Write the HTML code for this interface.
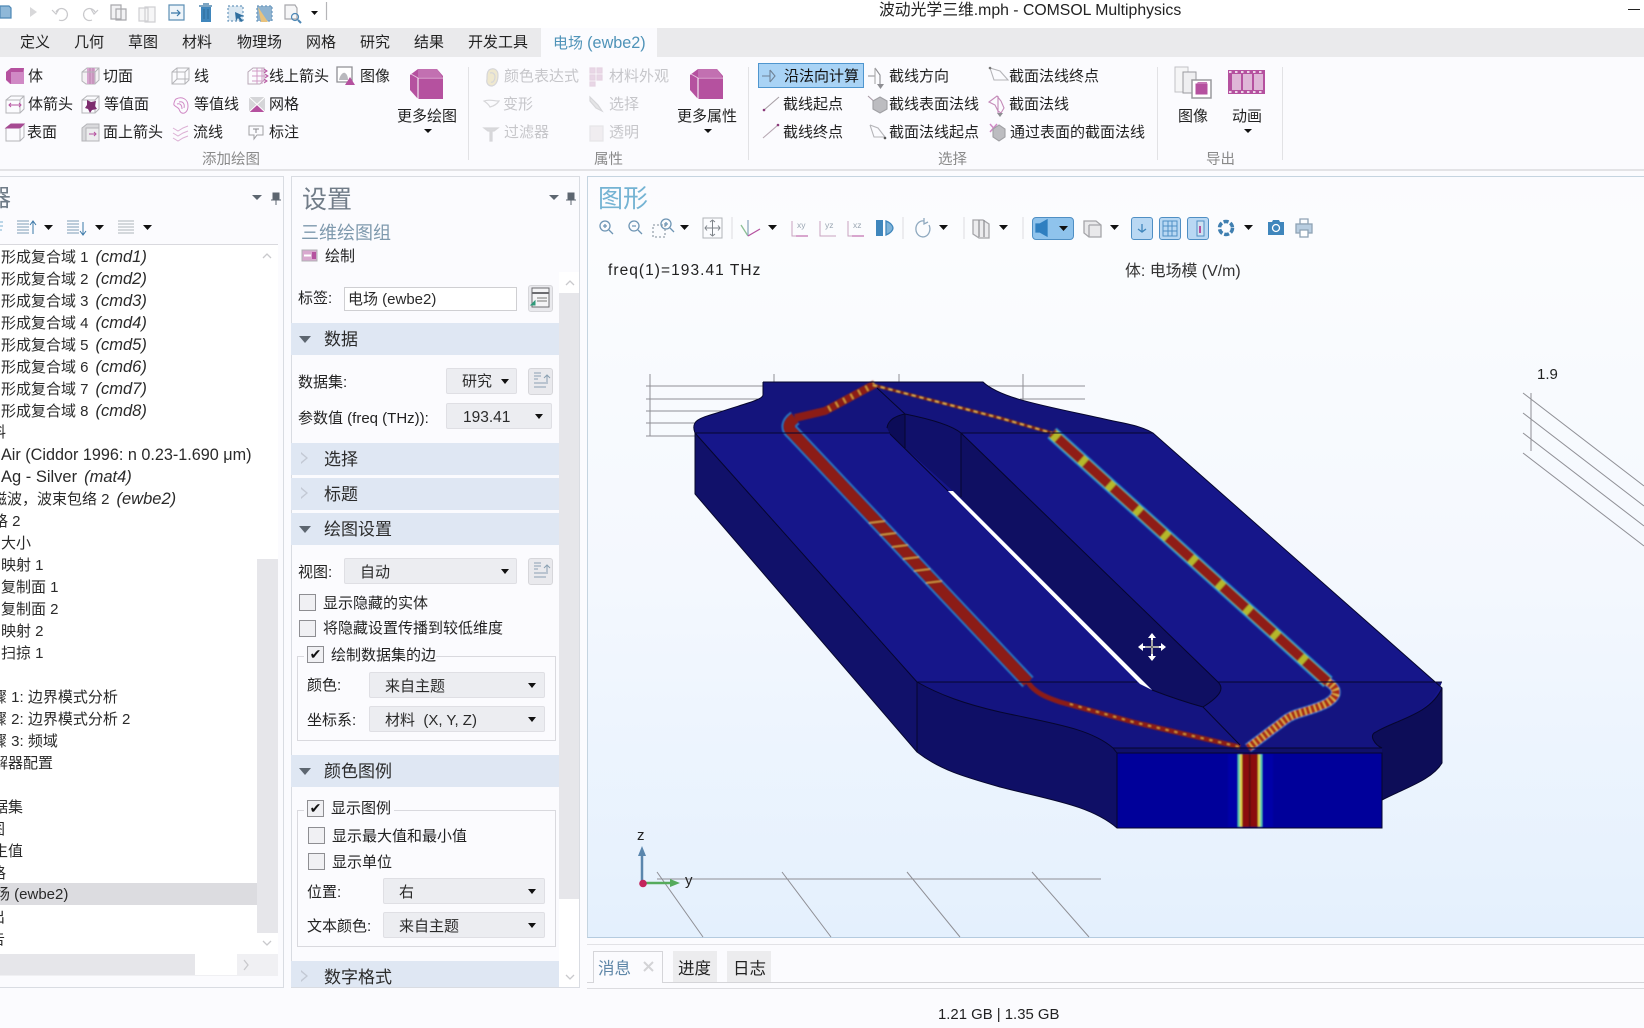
<!DOCTYPE html>
<html lang="zh"><head><meta charset="utf-8"><title>COMSOL</title>
<style>
html,body{margin:0;padding:0}
body{position:relative;width:1644px;height:1028px;overflow:hidden;background:#fbfbfe;font-family:"Liberation Sans","Noto Sans CJK SC",sans-serif;font-size:15px;color:#222}
.t{position:absolute;white-space:pre;line-height:20px;height:20px}
.b{position:absolute;box-sizing:border-box}
.g{color:#c6c6ca}
.l{color:#8a8a8a;font-size:14.5px}
.r{position:absolute;white-space:pre;line-height:24px;height:24px;font-size:15px;color:#2a2a2a}
.r i{margin-left:7px;font-size:16.5px}
.ar{position:absolute;width:0;height:0;border-left:4px solid transparent;border-right:4px solid transparent;border-top:5px solid #111}
.sec{position:absolute;left:291px;width:268px;height:32px;background:#dfe7f3;font-size:17px;line-height:33px;color:#2a2a2a}
.sec span{position:absolute;left:33px;white-space:pre}
.tri{position:absolute;left:8px;top:13px;width:0;height:0;border-left:6px solid transparent;border-right:6px solid transparent;border-top:7px solid #5d6670}
.otri{position:absolute;left:10px;top:9px;width:0;height:0;border-top:6px solid transparent;border-bottom:6px solid transparent;border-left:7px solid #c3c9d4}
.otri:after{content:"";position:absolute;left:-7px;top:-4px;border-top:4px solid transparent;border-bottom:4px solid transparent;border-left:5px solid #dfe7f3}
.cb{position:absolute;box-sizing:border-box;background:#f0f0f3;border:1px solid #8e8e92;width:17px;height:17px;font-size:14px;line-height:14px;text-align:center;color:#111}
.cmb{position:absolute;box-sizing:border-box;background:#ecedf1;border:1px solid #dfdfe4;border-radius:2px;height:26px;line-height:28px;white-space:pre;color:#2a2a2a;overflow:hidden}
.tb{position:absolute;box-sizing:border-box;background:#e9e9ed;border:1px solid #d6d6da;border-radius:3px}
</style></head><body>

<!-- title -->
<div class="b" style="left:0;top:0;width:1644px;height:28px;background:#fff"></div>
<div class="t" style="left:879px;top:1px;font-size:15.800px;color:#222">波动光学三维.mph - COMSOL Multiphysics</div>
<div class="b" style="left:1628px;top:9px;width:12px;height:1px;background:#222"></div>

<!-- tab bar -->
<div class="b" style="left:0;top:28px;width:1644px;height:29px;background:#eaeaec"></div>
<div class="b" style="left:541px;top:28px;width:116px;height:29px;background:#fbfbfe"></div>
<div class="t" style="left:20px;top:33px">定义</div>
<div class="t" style="left:74px;top:33px">几何</div>
<div class="t" style="left:128px;top:33px">草图</div>
<div class="t" style="left:182px;top:33px">材料</div>
<div class="t" style="left:237px;top:33px">物理场</div>
<div class="t" style="left:306px;top:33px">网格</div>
<div class="t" style="left:360px;top:33px">研究</div>
<div class="t" style="left:414px;top:33px">结果</div>
<div class="t" style="left:468px;top:33px">开发工具</div>
<div class="t" style="left:553px;top:33px;color:#4f93b8">电场 <span style="font-size:16.200px">(ewbe2)</span></div>

<!-- ribbon text -->
<div class="b" style="left:0;top:169px;width:1644px;height:2px;background:#e3e3e6"></div>
<div class="t" style="left:28px;top:67px">体</div><div class="t" style="left:103px;top:67px">切面</div><div class="t" style="left:194px;top:67px">线</div><div class="t" style="left:269px;top:67px">线上箭头</div><div class="t" style="left:360px;top:67px">图像</div>
<div class="t" style="left:28px;top:95px">体箭头</div><div class="t" style="left:104px;top:95px">等值面</div><div class="t" style="left:194px;top:95px">等值线</div><div class="t" style="left:269px;top:95px">网格</div>
<div class="t" style="left:27px;top:123px">表面</div><div class="t" style="left:103px;top:123px">面上箭头</div><div class="t" style="left:193px;top:123px">流线</div><div class="t" style="left:269px;top:123px">标注</div>
<div class="t" style="left:397px;top:107px">更多绘图</div>
<div class="ar" style="left:424px;top:129px;border-top-width:4px"></div>
<div class="t l" style="left:202px;top:150px">添加绘图</div>
<div class="b" style="left:468px;top:67px;width:1px;height:93px;background:#e2e2e5"></div>
<div class="t g" style="left:504px;top:67px">颜色表达式</div><div class="t g" style="left:503px;top:95px">变形</div><div class="t g" style="left:504px;top:123px">过滤器</div>
<div class="t g" style="left:609px;top:67px">材料外观</div><div class="t g" style="left:609px;top:95px">选择</div><div class="t g" style="left:609px;top:123px">透明</div>
<div class="t" style="left:677px;top:107px">更多属性</div>
<div class="ar" style="left:704px;top:129px;border-top-width:4px"></div>
<div class="t l" style="left:594px;top:150px">属性</div>
<div class="b" style="left:748px;top:67px;width:1px;height:93px;background:#e2e2e5"></div>
<div class="b" style="left:758px;top:63px;width:106px;height:25px;background:#a9d3f5;border:1px solid #4f96cf"></div>
<div class="t" style="left:784px;top:67px;color:#111">沿法向计算</div>
<div class="t" style="left:783px;top:95px">截线起点</div><div class="t" style="left:783px;top:123px">截线终点</div>
<div class="t" style="left:889px;top:67px">截线方向</div><div class="t" style="left:889px;top:95px">截线表面法线</div><div class="t" style="left:889px;top:123px">截面法线起点</div>
<div class="t" style="left:1009px;top:67px">截面法线终点</div><div class="t" style="left:1009px;top:95px">截面法线</div><div class="t" style="left:1010px;top:123px">通过表面的截面法线</div>
<div class="t l" style="left:938px;top:150px">选择</div>
<div class="b" style="left:1157px;top:67px;width:1px;height:93px;background:#e2e2e5"></div>
<div class="t" style="left:1178px;top:107px">图像</div><div class="t" style="left:1232px;top:107px">动画</div>
<div class="ar" style="left:1244px;top:129px;border-top-width:4px"></div>
<div class="t l" style="left:1206px;top:150px">导出</div>
<div class="b" style="left:1282px;top:67px;width:1px;height:93px;background:#e2e2e5"></div>

<!-- tree panel -->
<div class="b" style="left:-2px;top:176px;width:286px;height:812px;border:1px solid #d9dce2"></div>
<div class="t" style="left:-13px;top:184px;font-size:24px;line-height:30px;height:30px;color:#707c88">器</div>
<div class="b" style="left:-2px;top:244px;width:280px;height:732px;background:#fff;border:1px solid #d9d9de"></div>
<div class="b" style="left:257px;top:245px;width:21px;height:730px;background:#fff"></div>
<div class="b" style="left:257px;top:559px;width:21px;height:374px;background:#e6e6ea"></div>
<div class="b" style="left:0;top:954px;width:278px;height:22px;background:#f0f0f3"></div>
<div class="b" style="left:0;top:954px;width:195px;height:21px;background:#e6e6ea"></div>
<div class="b" style="left:195px;top:954px;width:42px;height:21px;background:#fff"></div>
<div class="b" style="left:0;top:883px;width:257px;height:22px;background:#dcdce0"></div>
<div class="r" style="left:1px;top:245px">形成复合域 1<i>(cmd1)</i></div>
<div class="r" style="left:1px;top:267px">形成复合域 2<i>(cmd2)</i></div>
<div class="r" style="left:1px;top:289px">形成复合域 3<i>(cmd3)</i></div>
<div class="r" style="left:1px;top:311px">形成复合域 4<i>(cmd4)</i></div>
<div class="r" style="left:1px;top:333px">形成复合域 5<i>(cmd5)</i></div>
<div class="r" style="left:1px;top:355px">形成复合域 6<i>(cmd6)</i></div>
<div class="r" style="left:1px;top:377px">形成复合域 7<i>(cmd7)</i></div>
<div class="r" style="left:1px;top:399px">形成复合域 8<i>(cmd8)</i></div>
<div class="r" style="left:-24px;top:421px">材料</div>
<div class="r" style="left:1px;top:443px;font-size:16.200px">Air (Ciddor 1996: n 0.23-1.690 μm)</div>
<div class="r" style="left:1px;top:465px;font-size:16.500px">Ag - Silver<i>(mat4)</i></div>
<div class="r" style="left:-23px;top:487px">电磁波，波束包络 2<i>(ewbe2)</i></div>
<div class="r" style="left:-22px;top:510px">网格 2</div>
<div class="r" style="left:1px;top:532px">大小</div>
<div class="r" style="left:1px;top:554px">映射 1</div>
<div class="r" style="left:1px;top:576px">复制面 1</div>
<div class="r" style="left:1px;top:598px">复制面 2</div>
<div class="r" style="left:1px;top:620px">映射 2</div>
<div class="r" style="left:1px;top:642px">扫掠 1</div>
<div class="r" style="left:-23px;top:686px">步骤 1: 边界模式分析</div>
<div class="r" style="left:-23px;top:708px">步骤 2: 边界模式分析 2</div>
<div class="r" style="left:-23px;top:730px">步骤 3: 频域</div>
<div class="r" style="left:-22px;top:752px">求解器配置</div>
<div class="r" style="left:-22px;top:796px">数据集</div>
<div class="r" style="left:-25px;top:818px">绘图</div>
<div class="r" style="left:-22px;top:840px">派生值</div>
<div class="r" style="left:-24px;top:862px">表格</div>
<div class="r" style="left:-20px;top:883px">电场 (ewbe2)</div>
<div class="r" style="left:-25px;top:906px">导出</div>
<div class="r" style="left:-25px;top:928px">报告</div>

<!-- settings panel -->
<div class="b" style="left:291px;top:176px;width:289px;height:812px;border:1px solid #d9dce2"></div>
<div class="t" style="left:302px;top:184px;font-size:25px;line-height:32px;height:32px;color:#717c88">设置</div>
<div class="t" style="left:301px;top:221px;font-size:18px;line-height:24px;height:24px;color:#7e99ad">三维绘图组</div>
<div class="t" style="left:325px;top:247px">绘制</div>
<div class="b" style="left:559px;top:272px;width:20px;height:715px;background:#fff"></div>
<div class="b" style="left:559px;top:293px;width:20px;height:606px;background:#e6e6ea"></div>

<div class="t" style="left:298px;top:289px">标签:</div>
<div class="b" style="left:344px;top:287px;width:173px;height:24px;background:#fff;border:1px solid #cfcfd2;line-height:23px;padding-left:3px;white-space:pre;color:#2a2a2a">电场 (ewbe2)</div>
<div class="tb" style="left:528px;top:285px;width:25px;height:27px"></div>

<div class="sec" style="top:323px"><div class="tri"></div><span>数据</span></div>
<div class="t" style="left:298px;top:373px">数据集:</div>
<div class="cmb" style="left:446px;top:368px;width:71px;padding-left:15px;line-height:26px">研究</div><div class="ar" style="left:501px;top:379px"></div>
<div class="tb" style="left:528px;top:368px;width:25px;height:27px"></div>
<div class="t" style="left:298px;top:409px">参数值 (freq (THz)):</div>
<div class="cmb" style="left:446px;top:403px;width:106px;padding-left:16px;font-size:15.500px">193.41</div><div class="ar" style="left:535px;top:414px"></div>

<div class="sec" style="top:443px"><div class="otri"></div><span>选择</span></div>
<div class="sec" style="top:478px"><div class="otri"></div><span>标题</span></div>
<div class="sec" style="top:513px"><div class="tri"></div><span>绘图设置</span></div>
<div class="t" style="left:298px;top:563px">视图:</div>
<div class="cmb" style="left:344px;top:558px;width:173px;padding-left:15px">自动</div><div class="ar" style="left:501px;top:569px"></div>
<div class="tb" style="left:528px;top:558px;width:25px;height:27px"></div>
<div class="cb" style="left:299px;top:594px"></div><div class="t" style="left:323px;top:594px">显示隐藏的实体</div>
<div class="cb" style="left:299px;top:620px"></div><div class="t" style="left:323px;top:619px">将隐藏设置传播到较低维度</div>
<div class="b" style="left:297px;top:656px;width:259px;height:85px;border:1px solid #d9d9de"></div>
<div class="b" style="left:304px;top:645px;width:132px;height:20px;background:#fbfbfe"></div>
<div class="cb" style="left:307px;top:646px">✔</div><div class="t" style="left:331px;top:646px">绘制数据集的边</div>
<div class="t" style="left:307px;top:676px">颜色:</div>
<div class="cmb" style="left:369px;top:672px;width:176px;padding-left:15px">来自主题</div><div class="ar" style="left:528px;top:683px"></div>
<div class="t" style="left:307px;top:711px">坐标系:</div>
<div class="cmb" style="left:369px;top:706px;width:176px;padding-left:15px">材料  (X, Y, Z)</div><div class="ar" style="left:528px;top:717px"></div>

<div class="sec" style="top:755px"><div class="tri"></div><span>颜色图例</span></div>
<div class="b" style="left:297px;top:810px;width:259px;height:137px;border:1px solid #d9d9de"></div>
<div class="b" style="left:304px;top:799px;width:90px;height:20px;background:#fbfbfe"></div>
<div class="cb" style="left:307px;top:800px">✔</div><div class="t" style="left:331px;top:799px">显示图例</div>
<div class="cb" style="left:308px;top:827px"></div><div class="t" style="left:332px;top:827px">显示最大值和最小值</div>
<div class="cb" style="left:308px;top:853px"></div><div class="t" style="left:332px;top:853px">显示单位</div>
<div class="t" style="left:307px;top:883px">位置:</div>
<div class="cmb" style="left:383px;top:878px;width:162px;padding-left:15px">右</div><div class="ar" style="left:528px;top:889px"></div>
<div class="t" style="left:307px;top:917px">文本颜色:</div>
<div class="cmb" style="left:383px;top:912px;width:162px;padding-left:15px">来自主题</div><div class="ar" style="left:528px;top:923px"></div>
<div class="sec" style="top:961px;height:26px;overflow:hidden"><div class="otri"></div><span>数字格式</span></div>

<!-- graphics panel -->
<div class="b" style="left:587px;top:176px;width:1058px;height:762px;border:1px solid #c5d4e0;border-bottom-color:#b5cbdf;background:linear-gradient(#fbfbfe 0,#fbfcfe 70px,#f4f8fe 400px,#e4f0fd 760px)"></div>
<div class="t" style="left:598px;top:183px;font-size:25px;line-height:32px;height:32px;color:#74b3d3">图形</div>
<div class="b" style="left:1032px;top:217px;width:42px;height:23px;background:#8fc3ec;border:1px solid #4f8fc4;border-radius:4px"></div>
<div class="tb" style="left:1131px;top:217px;width:22px;height:23px;background:#b9d8f3;border-color:#4f8fc4"></div>
<div class="tb" style="left:1159px;top:217px;width:22px;height:23px;background:#b9d8f3;border-color:#4f8fc4"></div>
<div class="tb" style="left:1187px;top:217px;width:22px;height:23px;background:#b9d8f3;border-color:#4f8fc4"></div>
<div class="t" style="left:608px;top:261px;font-size:15.500px;letter-spacing:1.050px">freq(1)=193.41 THz</div>
<div class="t" style="left:1125px;top:262px;font-size:15.900px;color:#333">体: 电场模 (V/m)</div>

<!-- messages -->
<div class="b" style="left:587px;top:944px;width:1058px;height:1px;background:#e2e2e6"></div>
<div class="b" style="left:587px;top:982px;width:1058px;height:1px;background:#d5d5d9"></div>
<div class="b" style="left:587px;top:988px;width:1058px;height:1px;background:#dcdce0"></div>
<div class="b" style="left:593px;top:951px;width:70px;height:32px;background:#fbfbfe;border:1px solid #d5d5d9;border-bottom:none"></div>
<div class="b" style="left:673px;top:951px;width:44px;height:31px;background:#ececee"></div>
<div class="b" style="left:727px;top:951px;width:44px;height:31px;background:#ececee"></div>
<div class="t" style="left:598px;top:959px;font-size:16.500px;color:#5f87a8">消息</div>
<div class="t" style="left:678px;top:959px;font-size:16.500px">进度</div>
<div class="t" style="left:733px;top:959px;font-size:16.500px">日志</div>
<div class="t" style="left:938px;top:1005px;font-size:14.900px">1.21 GB | 1.35 GB</div>

<!-- all vector art -->
<svg width="1644" height="1028" viewBox="0 0 1644 1028" style="position:absolute;left:0;top:0" fill="none">
<filter id="soft" x="-5%" y="-5%" width="110%" height="110%"><feGaussianBlur stdDeviation=".7"/></filter>
<!-- ===== quick access ===== -->
<g stroke-width="1.2">
<path d="M0 6h9l2 2v10H0z" fill="#8fb8d8" stroke="#4d87b5"/>
<path d="M30 7l7 5-7 5z" fill="#d8d8da"/>
<path d="M56 12a6 6 0 1 1 3 8M52 10l4 4 3-5" stroke="#c9c9cc"/>
<path d="M95 12a6 6 0 1 0-3 8M98 10l-4 4-3-5" stroke="#c9c9cc"/>
<path d="M111 5h10v14h-10zM116 9h10v11h-10z" stroke="#a8a8ac" fill="#f2f2f4"/>
<path d="M139 8h9v13h-9zM145 7h10v15h-10z" stroke="#cfcfd2" fill="#f6f6f7"/>
<path d="M169 5h15v15h-15z" stroke="#5d8fb5" fill="#eef4f9"/><path d="M171 13h9m-3-3l3 3-3 3" stroke="#3a78a8"/>
<path d="M201 7h10v15h-10z" fill="#3f86bc"/><path d="M199 6h13M203 4h6M204 9v10M208 9v10" stroke="#2f6f9f"/>
<rect x="228" y="6" width="15" height="15" stroke="#6a98bd" stroke-dasharray="2 2" fill="#dbe8f2"/><path d="M235 12l9 4-4 1 3 4-2 1-3-4-2 3z" fill="#2f6f9f"/>
<rect x="257" y="6" width="15" height="15" stroke="#6a98bd" stroke-dasharray="2 2" fill="#8fb3d0"/><path d="M258 7l10 15h-7z" fill="#e8c27d"/>
<path d="M285 5h10l2 3v11h-12z" stroke="#a8a8ac" fill="#f6f6f7"/><circle cx="295" cy="17" r="3.500" stroke="#4d87b5"/><path d="M298 20l3 3" stroke="#4d87b5" stroke-width="2"/>
<path d="M311 11h7l-3.500 4z" fill="#111"/><path d="M326.500 2v18" stroke="#b5b5b8"/>
</g>

<!-- ===== ribbon icons ===== -->
<g stroke="#b4b4b8" stroke-width="1">
<!-- 体 --><path d="M6 72l5-4h13v16H10l-4-4z" fill="#d089c5" stroke="none"/><path d="M6 72l5-4h13l-1 4H11v12l-5-4z" fill="#b5519f" stroke="none"/>
<!-- 切面 --><path d="M82 72l5-4h12v12l-4 4H86l-4-3z" fill="#f4f0f4"/><path d="M87 68h8v16h-8z" fill="#d7a5cf" stroke="none"/><path d="M90 68v16M93 68v16" stroke="#b987ae"/><path d="M82 72h13v12M95 72l4-4"/>
<!-- 线 --><path d="M172 72l5-4h12v12l-4 4h-13zM172 72h13v12M185 72l4-4M177 68v11l-5 5M177 79h12"/>
<!-- 线上箭头 --><path d="M248 72l5-4h11v12l-4 4h-12z" stroke="#b9a8b6"/><path d="M252 71h14M252 76h15M252 81h14M257 68v16M262 68v16" stroke="#d09bc5"/><path d="M264 69l3 2-3 2M265 74l3 2-3 2M264 79l3 2-3 2" stroke="#b5519f"/>
<!-- 图像 --><path d="M337 67h15v15h-15z" fill="#fff" stroke="#8f8f94" stroke-width="1.300"/><path d="M339 80c1-5 4-8 6-7 2 1 3 4 3 7z" fill="#b9b9bd" stroke="none"/><path d="M345 85l5-8 5 8z" fill="#b5519f" stroke="none"/>
<!-- 体箭头 --><path d="M6 100l5-4h13v13l-4 4H6z"/><path d="M6 100h14v13M20 100l4-4"/><path d="M9 105h12M11 103l-2 2 2 2M19 103l2 2-2 2" stroke="#b5519f"/>
<!-- 等值面 --><path d="M82 100l5-4h12v13l-4 4H82z"/><path d="M82 100h13v13M95 100l4-4"/><path d="M87 100l4 2 5-1-1 5 2 3-5 1-2 3-2-4-3-1 2-3z" fill="#7d2d6e" stroke="none"/>
<!-- 等值线 --><path d="M176 99c6-3 12 0 12 7 0 6-4 8-6 7-3-1-2-4-4-5-2-2-5-2-4-5s1-3 2-4zM179 102c4-1 6 2 5 6M177 104c3-1 5 1 5 5" stroke="#d089c5"/>
<!-- 网格 --><path d="M249 97h16v15h-16z" fill="#d5d5d8" stroke="none"/><path d="M249 112l8-8 8 8z" fill="#b5519f" stroke="none"/><path d="M249 97l16 15M265 97l-16 15" stroke="#fff"/>
<!-- 表面 --><path d="M6 128l5-4h13v13l-4 4H6z"/><path d="M6 128l5-4h13l-4 4z" fill="#a64a92" stroke="#a64a92"/><path d="M20 128v13"/>
<!-- 面上箭头 --><path d="M82 128l5-4h12v13l-4 4H82z" fill="#d9d9dc"/><path d="M86 128h13v13H86z" fill="#ececee"/><path d="M89 134h7m-2-2l2 2-2 2" stroke="#b5519f"/>
<!-- 流线 --><path d="M173 128l5 3 5-3 5-2M173 133l5 3 5-3 5-2M173 138l5 3 5-3 5-2" stroke="#dcb0d4"/>
<!-- 标注 --><path d="M249 126h14v9h-6l-3 4v-4h-5z" stroke="#a0a0a4"/><path d="M253 129h6M256 129v4" stroke="#8a8a8e"/>
</g>
<!-- big cubes -->
<g>
<path d="M410 75l8-6h19l6 7v23h-25l-8-9z" fill="#b5519f"/><path d="M418 78h25M418 78l-7-4" stroke="#e8c6e0" stroke-width="1"/><path d="M418 78v21" stroke="#fff" stroke-width="1"/><path d="M418 69h19l6 9h-25z" fill="#c678b5" opacity=".8"/>
<path d="M690 75l8-6h19l6 7v23h-25l-8-9z" fill="#b5519f"/><path d="M698 78h25M698 78l-7-4" stroke="#e8c6e0" stroke-width="1"/><path d="M698 78v21" stroke="#fff" stroke-width="1"/><path d="M698 69h19l6 9h-25z" fill="#c678b5" opacity=".8"/>
</g>
<!-- disabled -->
<g stroke="#d6d6d9" stroke-width="1.200">
<path d="M489 70c5-3 9 0 9 5 0 6-2 10-6 11-4 0-6-3-5-7 0-4 0-7 2-9z" fill="#efe8cf"/><path d="M490 73c3-1 5 1 5 4s-2 6-4 5"/>
<path d="M484 101c5-2 10 0 15 0-2 3-5 5-9 6-1-2-3-4-6-6z"/>
<path d="M484 128h14l-4 3h-2v10h-2v-10h-2z" fill="#d9d9dc"/>
<path d="M590 68h5v5h-5zM597 68h5v5h-5zM590 75h5v5h-5zM597 75h5v5h-5zM590 82h5v4h-5z" fill="#e9d6e6" stroke="#e5d4e2"/>
<path d="M590 97l8 8 4 6-6-3-6-7z" fill="#e4e4e6"/>
<path d="M590 126h13v15h-13z" fill="#f0edf0" stroke="#e6e6e8"/>
</g>
<!-- selection icons -->
<g stroke="#9a9aa0" stroke-width="1.100">
<path d="M762 76h8M770 70v12M770 70l5 6-5 6" stroke="#6f8296"/>
<path d="M764 110l15-13" stroke="#a8a0a6"/><circle cx="764" cy="110" r="1.300" fill="#8a3a7a" stroke="none"/>
<path d="M763 138l15-13" stroke="#b7a8b3"/><circle cx="778" cy="125" r="1.300" fill="#8a3a7a" stroke="none"/>
<path d="M868 76h7M875 68l5 7v9" stroke="#8d8d92"/><path d="M875 68v16" stroke="#aaa"/><path d="M877 84h7l-3.500 5z" fill="#8d8d92" stroke="none"/>
<path d="M868 96l10 9" stroke="#a89aa5"/><path d="M880 97l7 4v8l-7 4-7-4v-8z" fill="#bcbcc0" stroke="#a0a0a4"/>
<path d="M870 125l4 12h11l-7-9-8-3" stroke="#b4b4b8"/><circle cx="885" cy="138" r="1.300" fill="#555" stroke="none"/>
<path d="M990 68l4 12h14l-8-9-10-3" stroke="#b4b4b8"/><circle cx="990" cy="68" r="1.300" fill="#777" stroke="none"/>
<path d="M989 102l8-6 4 5 3 7-3 5-3-2-3-6zM998 96v17" stroke="#c48ab8"/><path d="M997 113h6l-3 4z" fill="#8d8d92" stroke="none"/>
<path d="M990 124l7 8M997 124l-7 8" stroke="#d089c5" stroke-width="1.500"/><path d="M999 125l6 4v8l-6 4-6-4v-8z" fill="#bcbcc0" stroke="#a0a0a4"/>
</g>
<!-- export icons -->
<g stroke="#9a9a9e">
<path d="M1175 67h13v25h-13z" fill="#f5f5f6" stroke="#c2c2c5"/><path d="M1183 72h13v21h-13z" fill="#efeff1"/>
<path d="M1192 80h19v18h-19z" fill="#fff" stroke="#9a9a9e" stroke-width="1.500"/>
<path d="M1196 84h11v10h-11z" fill="#b5519f" stroke="#b5519f"/><path d="M1196 84l2-2h9v2z" fill="#c678b5" stroke="none"/>
</g>
<g>
<rect x="1228" y="70" width="37" height="24" fill="#b5519f"/>
<rect x="1232" y="74" width="9" height="16" fill="#dfb6d7"/><rect x="1243" y="74" width="9" height="16" fill="#dfb6d7"/><rect x="1254" y="74" width="9" height="16" fill="#dfb6d7"/>
<path d="M1229 72h36M1229 92h36" stroke="#fff" stroke-dasharray="2.500 3.500" stroke-width="1.500"/>
</g>
<!-- pins -->
<path d="M252 195h10l-5 5z" fill="#5d6670"/><path d="M273 193h6v7h-6zM276 200v5M271 200h10" fill="#5d6670" stroke="#5d6670"/>
<path d="M549 195h10l-5 5z" fill="#5d6670"/><path d="M568 193h6v7h-6zM571 200v5M566 200h10" fill="#5d6670" stroke="#5d6670"/>
<!-- tree toolbar -->
<g stroke="#6e95b4" stroke-width="1">
<path d="M0 222h3M0 226h3M0 230h2" stroke="#7bb0d3"/>
<path d="M17 221h12M17 224h12M17 227h12M17 230h12M17 233h12" stroke="#7e9cb5"/><path d="M33 234v-12m-3 3l3-4 3 4" stroke="#3a78a8"/>
<path d="M67 221h12M67 224h12M67 227h12M67 230h12M67 233h12" stroke="#7e9cb5"/><path d="M83 222v12m-3-3l3 4 3-4" stroke="#3a78a8"/>
<path d="M118 221h16M118 224h16M118 227h16M118 230h16M118 233h16" stroke="#aeb4ba"/>
</g>
<path d="M44 225h9l-4.500 5zM95 225h9l-4.500 5zM143 225h9l-4.500 5z" fill="#111"/>
<!-- tree / settings scroll arrows -->
<path d="M263 258l4-4 4 4M263 941l4 4 4-4" stroke="#c9c9cc" stroke-width="1.300"/>
<path d="M244 960l4 5-4 5" stroke="#c9c9cc" stroke-width="1.300"/>
<path d="M566 285l4-4 4 4M566 975l4 4 4-4" stroke="#c9c9cc" stroke-width="1.300"/>
<!-- settings icons -->
<rect x="302" y="250" width="15" height="11" fill="#d9a8cf" stroke="#b0b0b4"/><path d="M304 255.500h7" stroke="#fff" stroke-width="2"/><rect x="312" y="252" width="4" height="7" fill="#b5519f"/>
<g stroke="#6c6c70">
<rect x="532" y="288" width="17" height="19" fill="#f4f4f6"/><path d="M532 293h17" stroke-width="2"/><path d="M537 298h10M537 301h10" stroke="#777"/><path d="M531 305l4-4v4z" fill="#2f9a7a" stroke="#2f9a7a"/>
<path d="M534 373h7M534 376h7M534 379h4M534 383h12M534 387h12M547 375v9m-3-6l3-3 3 3" stroke="#8aa0b2"/>
<path d="M534 563h7M534 566h7M534 569h4M534 573h12M534 577h12M547 565v9m-3-6l3-3 3 3" stroke="#8aa0b2"/>
</g>

<!-- ===== graphics toolbar ===== -->
<g stroke="#6e95b4" stroke-width="1.300">
<circle cx="605" cy="226" r="5"/><path d="M609 230l4 4M603 226h4M605 224v4"/>
<circle cx="634" cy="226" r="5"/><path d="M638 230l4 4M632 226h4"/>
<path d="M653 225h12v12h-12z" stroke-dasharray="2 2" stroke="#98a3ad"/><circle cx="666" cy="224" r="5"/><path d="M670 228l4 4M664 224h4M666 222v4"/>
<path d="M703 218h19v20h-19z" stroke="#b0b4b8" stroke-width="1"/><path d="M712.500 220v16M705 228h15M710 222l2.500-2 2.500 2M710 234l2.500 2 2.500-2M707 225.500l-2 2.500 2 2.500M718 225.500l2 2.500-2 2.500" stroke="#7c8288" stroke-width="1"/>
<path d="M741 225l7 11" stroke="#8cbf94"/><path d="M748 236v-16" stroke="#8fa9bf"/><path d="M748 236l12-7" stroke="#b5519f"/>
<path d="M792 221v15h16M820 221v15h16M848 221v15h16" stroke="#c9a3c0" stroke-width="1"/>
<path d="M796 236h12M852 236h12" stroke="#b5519f" stroke-width="1"/>
<rect x="876" y="220" width="7" height="16" fill="#3f86bc" stroke="none"/><path d="M886 221c5 2 7 5 7 7s-2 5-7 7z" fill="#7db2d8" stroke="#3f86bc"/>
<path d="M924 221a7 8 0 1 0 5 4M924 218v6l4-2" stroke="#8fa9bf"/>
<path d="M973 220h10l6 4v14h-10l-6-4z" stroke="#a5a5a9" fill="#ececee"/><path d="M979 220v17M984 220v17" stroke="#929296"/>
<path d="M1040 224l7-4v16l-7-4h-4v-8z" fill="#2f7fc0" stroke="#2f7fc0"/>
<path d="M1084 221h12l5 4v12h-12l-5-4z" stroke="#a5a5a9" fill="#e9e9eb"/><path d="M1089 225h12M1089 225v12" stroke="#a5a5a9"/>
<path d="M1142 224v8m-4-3l4 3 4-3" stroke="#3f86bc"/>
<path d="M1163 221h14v15h-14zM1168 221v15M1172 221v15M1163 226h14M1163 231h14" stroke="#4f8fc4" stroke-width="1"/>
<path d="M1197 221h7v15h-7z" stroke="#4f8fc4" fill="#cfe2f2" stroke-width="1"/><path d="M1200 226v7" stroke="#b5519f" stroke-width="2"/>
<circle cx="1226" cy="228" r="6.500" stroke="#3f7fb0" stroke-width="3.500" stroke-dasharray="5 2"/>
<path d="M1268 222h4l1-2h6l1 2h4v13h-16z" fill="#3f86bc" stroke="none"/><circle cx="1276" cy="228" r="3.500" stroke="#fff"/>
<path d="M1300 219h8v5h-8z" stroke="#8fa3b5"/><rect x="1296" y="224" width="16" height="9" fill="#b8cde0" stroke="#8fa3b5"/><rect x="1300" y="230" width="8" height="7" fill="#fff" stroke="#8fa3b5"/>
</g>
<g font-family="Liberation Sans" font-size="8.500" fill="#9aa6b2"><text x="797" y="228">xy</text><text x="825" y="228">yz</text><text x="853" y="228">xz</text></g>
<path d="M680 225h9l-4.500 5zM768 225h9l-4.500 5zM939 225h9l-4.500 5zM999 225h9l-4.500 5zM1110 225h9l-4.500 5zM1244 225h9l-4.500 5zM1059 226h9l-4.500 5z" fill="#111"/>
<path d="M732 217v22M903 217v22M964 217v22M1023 217v22" stroke="#dcdce0"/>

<!-- ===== grid ===== -->
<g stroke="#8f8f95" stroke-width="1">
<path d="M646 386H770M646 399H770M646 411H760M646 423H720M646 436H700M650 374V436M774 374V384M899 374V384M1023 374V400M960 386H1085M1020 399H1085"/>
<path d="M1531 393V451M1523 393L1644 486M1523 413L1644 506M1523 433L1644 526M1523 453L1644 546"/>
<path d="M657 879H1101M657 872L703 937M782 872L831 937M907 872L960 937M1032 872L1089 937"/>
</g>

<!-- ===== model ===== -->
<path d="M695 433V494L917 752V682Z" fill="#11116a"/>
<path d="M917 682C940 695 965 704 1000 712C1050 723 1090 728 1113 748L1117 753V828C1090 805 1050 800 1000 787C965 777 940 770 917 752Z" fill="#0f0f66"/>
<path d="M1442 688V763C1432 780 1405 788 1382 800V748C1375 745 1368 735 1376 732C1395 720 1430 715 1442 688Z" fill="#0d0d58"/>
<path d="M763 382H983C1000 398 1040 405 1100 418C1125 424 1140 425 1153 433L1442 688C1430 715 1395 720 1376 732C1368 735 1375 745 1382 748H1113C1090 728 1050 723 1000 712C965 704 940 695 917 682L695 433C690 420 700 418 720 412C740 405 763 400 763 395Z" fill="#16168a"/>
<path d="M763 382H983C1000 398 1040 405 1100 418C1125 424 1140 425 1153 433H695C690 420 700 418 720 412C740 405 763 400 763 395Z" fill="#14147c"/>
<path d="M917 682H1442C1430 715 1395 720 1376 732C1368 735 1375 745 1382 748H1113C1090 728 1050 723 1000 712C965 704 940 695 917 682Z" fill="#141480"/>
<!-- hole -->
<path d="M905 414C925 418 950 424 961 433L1218 682C1224 688 1222 695 1203 707C1185 702 1165 695 1152 690L953 491L905 448Z" fill="#10106a"/>
<path d="M961 433L1218 682C1224 688 1222 695 1203 707C1185 702 1165 695 1152 690L961 497Z" fill="#0f0f62"/>
<path d="M887 428C888 420 895 416 905 414V448L948 491L890 434Z" fill="#0c0c58"/>
<path d="M948 491L953 491L1152 690L1140 684Z" fill="#fff"/>
<!-- front face -->
<path d="M1113 748H1382V753H1117Z" fill="#10106a"/>
<rect x="1117" y="753" width="265" height="75" fill="#00009a"/>
<g filter="url(#soft)">
<rect x="1228" y="754" width="10" height="73" fill="#0004a8"/><rect x="1262" y="754" width="11" height="73" fill="#0004a8"/>
<rect x="1238" y="754" width="4" height="73" fill="#5fd0b0"/><rect x="1258" y="754" width="4" height="73" fill="#5fd0b0"/>
<rect x="1240" y="754" width="2" height="73" fill="#e6d64a"/><rect x="1258" y="754" width="2" height="73" fill="#e6d64a"/>
<rect x="1242" y="754" width="16" height="73" fill="#8b0d0a"/><rect x="1249" y="754" width="1.500" height="73" fill="#4a0808"/>
</g>
<!-- left waveguide -->
<g stroke-linejoin="round" stroke-linecap="butt" filter="url(#soft)">
<path d="M795 418C788 423 787 428 793 433L1028 682" stroke="#2a8cd6" stroke-width="15"/>
<path d="M795 418C788 423 787 428 793 433L1028 682" stroke="#0f1a48" stroke-width="12.500"/>
<path d="M795 418C788 423 787 428 793 433L1028 682" stroke="#8c1d15" stroke-width="11"/>
<path d="M875 384L825 411L795 418" stroke="#8c1d15" stroke-width="8"/>
<path d="M875 384L825 411" stroke="#d9a040" stroke-width="6" stroke-dasharray="1.500 7"/>
<path d="M869 523l16-2M880 535l16-2M892 547l16-2M903 559l16-2M914 571l16-2M926 583l16-2" stroke="#d8a848" stroke-width="1.300"/>
<path d="M1028 682C1034 692 1045 697 1060 702L1133 722L1240 747" stroke="#8c1d15" stroke-width="5"/>
<path d="M1070 704L1133 722L1240 747" stroke="#d9a040" stroke-width="1.500" stroke-dasharray="3 6"/>
<!-- right waveguide -->
<path d="M873 385L1000 418L1052 433" stroke="#7c2414" stroke-width="3"/>
<path d="M873 385L1000 418L1052 433" stroke="#e0a84a" stroke-width="2" stroke-dasharray="4 4"/>
<path d="M1052 433L1328 682" stroke="#1c7fd0" stroke-width="14"/>
<path d="M1052 433L1328 682" stroke="#3fb89a" stroke-width="11.500"/>
<path d="M1052 433L1328 682" stroke="#b5b82a" stroke-width="10"/>
<path d="M1052 433L1328 682" stroke="#8f1d12" stroke-width="10" stroke-dasharray="31 6" stroke-dashoffset="-8"/>
<path d="M1328 682C1337 688 1340 695 1327 703C1310 712 1295 712 1285 720L1248 748" stroke="#1c7fd0" stroke-width="10"/>
<path d="M1328 682C1337 688 1340 695 1327 703C1310 712 1295 712 1285 720L1248 748" stroke="#a92c14" stroke-width="8"/>
<path d="M1328 682C1337 688 1340 695 1327 703C1310 712 1295 712 1285 720L1248 748" stroke="#e2b84c" stroke-width="8" stroke-dasharray="1.500 3.500"/>
</g>
<!-- edges -->
<g stroke="#06062e" stroke-width="1">
<path d="M763 382H983C1000 398 1040 405 1100 418C1125 424 1140 425 1153 433L1442 688V763C1432 780 1405 788 1382 800"/>
<path d="M763 382V395C763 400 740 405 720 412C700 418 690 420 695 433V494L917 752C940 770 965 777 1000 787C1050 800 1090 805 1117 828H1382V753H1117V828M1113 748H1382M1113 748L1117 753"/>
<path d="M695 433H890M961 433H1153M917 682H1137M1218 682H1442M695 433L917 682V752"/>
<path d="M917 682C940 695 965 704 1000 712C1050 723 1090 728 1113 748"/>
<path d="M1442 688C1430 715 1395 720 1376 732C1368 735 1375 745 1382 748"/>
<path d="M877 388L905 414V448M887 428C888 420 895 416 905 414C925 418 950 424 961 433V497M890 434L948 491M961 433L1218 682C1224 688 1222 695 1203 707C1185 702 1165 695 1152 690M1203 707L1240 745"/>
</g>
<!-- triad -->
<path d="M642 883V852" stroke="#5a86ad" stroke-width="2.500"/><path d="M642 846l-4 10h8z" fill="#5a86ad"/>
<path d="M645 883H672" stroke="#55ab5c" stroke-width="2.500"/><path d="M680 883l-10-4v8z" fill="#55ab5c"/>
<circle cx="643" cy="883.500" r="3.800" fill="#c4245c"/>
<text x="637" y="840" font-family="Liberation Sans" font-size="15" fill="#222">z</text>
<text x="685" y="885" font-family="Liberation Sans" font-size="15" fill="#222">y</text>
<text x="1537" y="379" font-family="Liberation Sans" font-size="15" fill="#222">1.9</text>
<!-- cursor -->
<g stroke="#fff" stroke-width="2"><path d="M1152 636V658M1141 647H1163"/></g>
<path d="M1152 633l-4 5h8zM1152 661l-4-5h8zM1138 647l5-4v8zM1166 647l-5-4v8z" fill="#fff"/>
<path d="M1152 640V654M1145 647H1159" stroke="#222" stroke-width=".8"/>
<!-- close x -->
<path d="M644 962l9 9M653 962l-9 9" stroke="#d3d3d6" stroke-width="2"/>
</svg>
</body></html>
